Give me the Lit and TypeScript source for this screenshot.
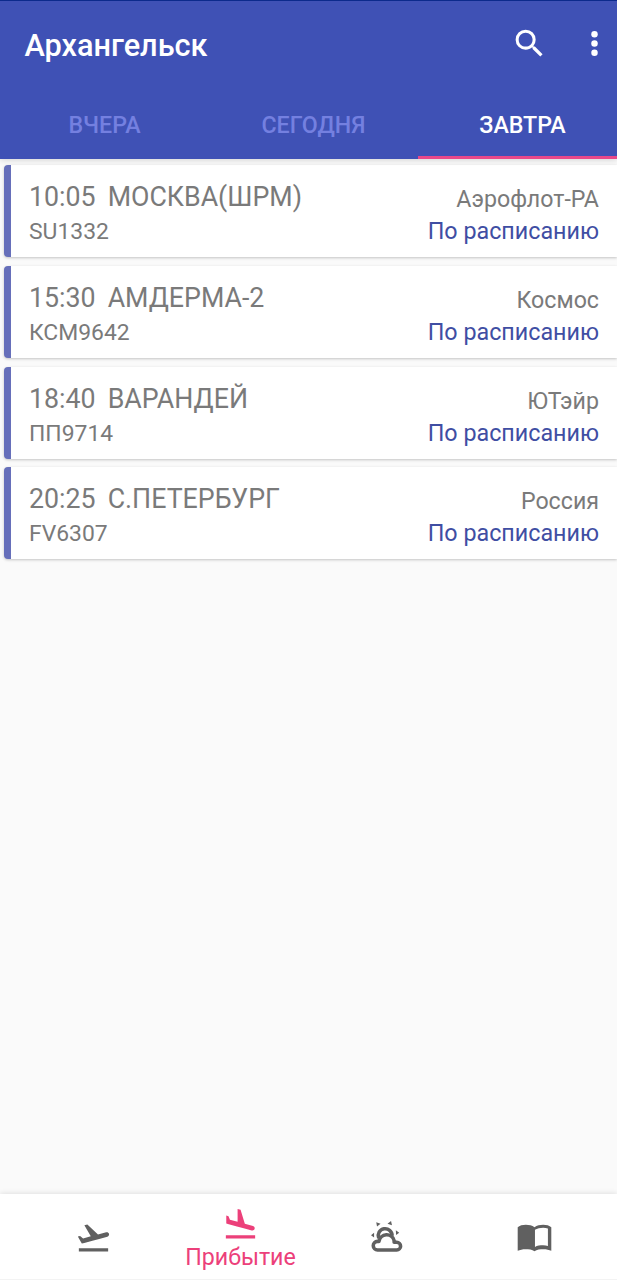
import { LitElement, html, css, svg } from "lit";
import { customElement } from "lit/decorators.js";

interface Flight {
  time: string;
  city: string;
  code: string;
  airline: string;
}

const FLIGHTS: Flight[] = [
  { time: "10:05", city: "МОСКВА(ШРМ)", code: "SU1332", airline: "Аэрофлот-РА" },
  { time: "15:30", city: "АМДЕРМА-2", code: "КСМ9642", airline: "Космос" },
  { time: "18:40", city: "ВАРАНДЕЙ", code: "ПП9714", airline: "ЮТэйр" },
  { time: "20:25", city: "С.ПЕТЕРБУРГ", code: "FV6307", airline: "Россия" },
];

const icon = (body: unknown) => html`<svg class="icon" viewBox="0 0 24 24">${body}</svg>`;

const search = svg`<path d="M15.5 14h-.79l-.28-.27A6.471 6.471 0 0 0 16 9.5 6.5 6.5 0 1 0 9.5 16c1.61 0 3.09-.59 4.23-1.57l.27.28v.79l5 4.99L20.49 19l-4.99-5zm-6 0C7.01 14 5 11.99 5 9.5S7.01 5 9.5 5 14 7.01 14 9.5 11.99 14 9.5 14z"/>`;
const more = svg`<circle cx="12" cy="6" r="2.1"/><circle cx="12" cy="12" r="2.1"/><circle cx="12" cy="18" r="2.1"/>`;
const takeoff = svg`<path d="M2.5 19h19v2h-19zm19.57-9.36c-.21-.8-1.04-1.28-1.84-1.06L14.92 10l-6.9-6.43-1.93.51 4.14 7.17-4.97 1.33-1.97-1.54-1.45.39 1.82 3.16.77 1.33 1.6-.43 5.31-1.42 4.35-1.16L21 11.49c.81-.23 1.28-1.05 1.07-1.85z"/>`;
const landing = svg`<path d="M2.5 19h19v2h-19zm7.18-5.73l4.35 1.16 5.31 1.42c.8.21 1.62-.26 1.84-1.06.21-.8-.26-1.62-1.06-1.84l-5.31-1.42-2.76-9.02L10.12 2v8.28L5.15 8.95l-.93-2.32-1.45-.39v5.17l1.6.43 5.31 1.43z"/>`;
const weather = svg`
  <path d="M6.3 12.4A4.5 4.5 0 1 1 15 10.8" fill="none" stroke="currentColor" stroke-width="2.3"/>
  <path d="M5.6 20.1a2.8 2.8 0 0 1-.1-5.6h1a5 5 0 0 1 9.8-.5v1.1h1.7a2.5 2.5 0 0 1 0 5z" fill="none" stroke="currentColor" stroke-width="2.3" stroke-linejoin="round"/>
  <path d="M4.7 2.1l2.8.9-2.3 1.9zM14.3 1.3l.6 2.8-2.9-1zM3.3 8.9v3.1l-2-1.5zM17.4 7.3l2.2 1.6-2 1.5z"/>`;
const book = svg`<path fill-rule="evenodd" d="M1.1 5.4C2.2 4.2 4.4 3.7 6.4 3.7c2 0 4.1.4 5.6 1.6 1.5-1.2 3.6-1.6 5.6-1.6 2 0 4.2.5 5.3 1.7v15.2c-1.4-.6-3.2-1-5-1-2.2 0-4.4.2-5.9 1.3-1.5-1.1-3.7-1.3-5.9-1.3-1.8 0-3.6.4-5 1zM12.3 7v11.1c1.4-.8 3.4-1 5.3-1 1.1 0 2.2.1 3.1.4V6.2c-1-.4-2-.5-3.1-.5-1.9 0-3.9.5-5.3 1.3z"/>`;

@customElement("app-root")
export class AppRoot extends LitElement {
  static styles = css`
    :host {
      display: flex;
      flex-direction: column;
      height: 1280px;
      overflow: hidden;
      background: #fafafa;
      font-family: Roboto, sans-serif;
      color: #7a7a7a;
    }
    .icon {
      display: block;
      width: 37px;
      height: 37px;
      fill: currentColor;
    }
    .header {
      box-sizing: border-box;
      flex: none;
      height: 159px;
      border-top: 1px solid #0c2a8c;
      background: #3f51b5;
      box-shadow: 0 1px 6px rgba(0, 0, 0, 0.16);
      display: flex;
      flex-direction: column;
      z-index: 1;
    }
    .bar {
      height: 87px;
      display: flex;
      align-items: center;
      padding-left: 24.5px;
      color: #fff;
    }
    .title {
      flex: 1;
      padding-top: 1px;
      font-size: 30.7px;
      font-weight: 500;
      white-space: nowrap;
    }
    .actions {
      display: flex;
      gap: 28px;
      margin: 0 4px 2px 0;
    }
    .tabs {
      flex: 1;
      display: grid;
      grid-template-columns: 209px 209px 209px;
      width: 617px;
      overflow: hidden;
      font-size: 23.2px;
      font-weight: 500;
      color: #7480e0;
    }
    .tab {
      box-sizing: border-box;
      display: flex;
      align-items: center;
      justify-content: center;
      padding-top: 5px;
      border-bottom: 3px solid transparent;
    }
    .tab.active {
      color: #fff;
      border-bottom-color: #e8488a;
    }
    .list {
      flex: 1;
      display: flex;
      flex-direction: column;
      gap: 8.75px;
      padding: 6px 0 0 4px;
    }
    .card {
      box-sizing: border-box;
      height: 92px;
      display: grid;
      grid-template-columns: 1fr auto;
      grid-template-rows: 36px 32px;
      align-content: start;
      padding: 14px 18px 0 18px;
      border-left: 7px solid #666fba;
      border-radius: 4px 0 0 4px;
      background: #fff;
      box-shadow: 0 1px 3px rgba(0, 0, 0, 0.22);
      white-space: nowrap;
      font-size: 23.3px;
    }
    .route {
      font-size: 26.75px;
      line-height: 37px;
      display: flex;
      gap: 12px;
    }
    .status {
      line-height: 32px;
    }
    .code {
      font-size: 22.9px;
      line-height: 33px;
    }
    .airline {
      font-size: 23.2px;
      line-height: 41px;
      text-align: right;
    }
    .status {
      text-align: right;
      color: #3f4ea3;
    }
    .nav {
      box-sizing: border-box;
      flex: none;
      height: 86.5px;
      display: grid;
      grid-template-columns: repeat(4, 147px);
      padding-left: 20px;
      background: #fff;
      border-bottom: 1.5px solid #f3f3f3;
      box-shadow: 0 -1px 5px rgba(0, 0, 0, 0.1);
      color: #606060;
    }
    .item {
      display: flex;
      flex-direction: column;
      align-items: center;
      padding-top: 25px;
    }
    .item.active {
      padding-top: 12.5px;
      color: #ec407a;
    }
    .label {
      font-size: 23.2px;
      line-height: 28px;
    }
  `;

  render() {
    return html`
      <header class="header">
        <div class="bar">
          <div class="title">Архангельск</div>
          <div class="actions">${icon(search)}${icon(more)}</div>
        </div>
        <div class="tabs">
          <div class="tab">ВЧЕРА</div>
          <div class="tab">СЕГОДНЯ</div>
          <div class="tab active">ЗАВТРА</div>
        </div>
      </header>
      <main class="list">
        ${FLIGHTS.map(
          (f) => html`<article class="card">
            <div class="route"><span>${f.time}</span><span>${f.city}</span></div>
            <div class="airline">${f.airline}</div>
            <div class="code">${f.code}</div>
            <div class="status">По расписанию</div>
          </article>`
        )}
      </main>
      <nav class="nav">
        <div class="item">${icon(takeoff)}</div>
        <div class="item active">${icon(landing)}<span class="label">Прибытие</span></div>
        <div class="item">${icon(weather)}</div>
        <div class="item">${icon(book)}</div>
      </nav>
    `;
  }
}
